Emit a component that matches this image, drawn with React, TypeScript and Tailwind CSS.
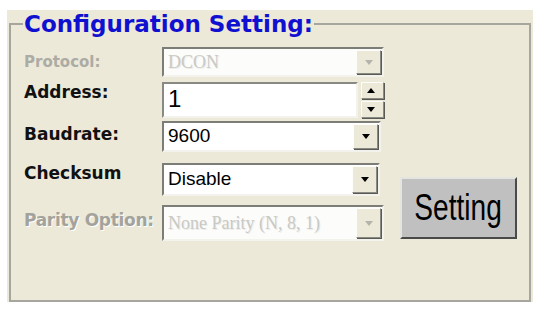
const dejavu = "font-[family-name:'DejaVu_Sans',Verdana,sans-serif]";
const arial = "font-[family-name:'Liberation_Sans',Arial,sans-serif]";
const times = "font-[family-name:'Liberation_Serif','Times_New_Roman',serif]";

function Tri({ up = false, color = "#000" }: { up?: boolean; color?: string }) {
  return (
    <svg width="8" height="5" viewBox="0 0 8 5">
      <path d={up ? "M0 5L4 0L8 5Z" : "M0 0L8 0L4 5Z"} fill={color} />
    </svg>
  );
}

function DropButton({ disabled = false }: { disabled?: boolean }) {
  return (
    <div className="ml-auto mr-[1px] my-[1px] w-[25px] flex items-center justify-center bg-[#ece9d8] border border-t-[#fdfdfb] border-l-[#fdfdfb] border-r-[#8a8a84] border-b-[#8a8a84] shadow-[1px_1px_0_#5a5a55]">
      <Tri color={disabled ? "#b4b4ac" : "#000"} />
    </div>
  );
}

function Combo({
  value,
  width,
  height,
  disabled = false,
}: {
  value: string;
  width: string;
  height: string;
  disabled?: boolean;
}) {
  return (
    <div
      className={`flex ${width} ${height} border-2 border-t-[#7d7d78] border-l-[#7d7d78] border-r-[#f3f2ec] border-b-[#f3f2ec] ${
        disabled ? "bg-[#fcfcfa]" : "bg-white"
      }`}
    >
      <div
        className={
          disabled
            ? `flex items-center pl-[4px] text-[18px] text-[#c9c9c3] ${times} [text-shadow:1px_1px_0_#ececec]`
            : `flex items-center pl-[4px] text-[19px] text-black ${arial}`
        }
      >
        {value}
      </div>
      <DropButton disabled={disabled} />
    </div>
  );
}

function SpinButton({ up = false }: { up?: boolean }) {
  return (
    <div className="h-[17px] w-[23px] flex items-center pl-[5px] bg-[#ece9d8] border border-t-[#fdfdfb] border-l-[#fdfdfb] border-r-[#8a8a84] border-b-[#8a8a84] shadow-[1px_1px_0_#5a5a55]">
      <Tri up={up} />
    </div>
  );
}

export default function App() {
  return (
    <div className="w-[549px] h-[317px] bg-white pt-[10px] pl-[7px]">
      <div className="w-[526px] h-[292px] bg-[#ece9d9] pt-[2px] pl-[2px]">
        <fieldset className="w-[522px] h-[290px] border-2 border-[#a6a69e] pl-[12px]">
          <legend
            className={`px-[1px] text-[23px] leading-[24px] font-bold text-[#1010d0] ${dejavu}`}
          >
            Configuration Setting:
          </legend>

          <div className="flex items-start pl-[1px]">
            <div className="flex flex-col w-[360px]">
              {/* Protocol */}
              <div className="flex items-center mt-[11px]">
                <div
                  className={`w-[138px] text-[15px] font-bold text-[#acaca5] ${dejavu}`}
                >
                  Protocol:
                </div>
                <Combo value="DCON" width="w-[222px]" height="h-[30px]" disabled />
              </div>

              {/* Address */}
              <div className="flex items-start mt-[5px]">
                <div
                  className={`w-[138px] text-[17px] leading-[20px] font-bold text-[#111] ${dejavu}`}
                >
                  Address:
                </div>
                <div className="flex w-[196px] h-[36px] border-2 border-t-[#8a8a84] border-l-[#8a8a84] border-r-[#f3f2ec] border-b-[#f3f2ec] bg-white">
                  <div className={`pl-[4px] pt-[1px] text-[24px] leading-[28px] text-black ${arial}`}>
                    1
                  </div>
                </div>
                <div className="flex flex-col gap-[2px] ml-[3px]">
                  <SpinButton up />
                  <SpinButton />
                </div>
              </div>

              {/* Baudrate */}
              <div className="flex items-start mt-[3px]">
                <div
                  className={`w-[138px] mt-[3px] text-[17px] leading-[20px] font-bold text-[#111] ${dejavu}`}
                >
                  Baudrate:
                </div>
                <Combo value="9600" width="w-[219px]" height="h-[31px]" />
              </div>

              {/* Checksum */}
              <div className="flex items-start mt-[11px]">
                <div
                  className={`w-[138px] text-[17px] leading-[20px] font-bold text-[#111] ${dejavu}`}
                >
                  Checksum
                </div>
                <Combo value="Disable" width="w-[218px]" height="h-[33px]" />
              </div>

              {/* Parity */}
              <div className="flex items-start mt-[9px]">
                <div
                  className={`w-[138px] mt-[5px] text-[17px] leading-[20px] font-bold tracking-[-0.3px] text-[#a3a39c] ${dejavu} [text-shadow:1px_1px_0_#ffffff]`}
                >
                  Parity Option:
                </div>
                <Combo
                  value="None Parity (N, 8, 1)"
                  width="w-[222px]"
                  height="h-[36px]"
                  disabled
                />
              </div>
            </div>

            <button className="ml-[16px] mt-[141px] w-[117px] h-[62px] flex items-center justify-center bg-[#c0c0c0] border-2 border-t-[#e4e4e0] border-l-[#e4e4e0] border-r-[#4a4a4a] border-b-[#4a4a4a]">
              <span
                className={`inline-block scale-x-[0.78] text-[36px] leading-[40px] text-black ${arial}`}
              >
                Setting
              </span>
            </button>
          </div>
        </fieldset>
      </div>
    </div>
  );
}
